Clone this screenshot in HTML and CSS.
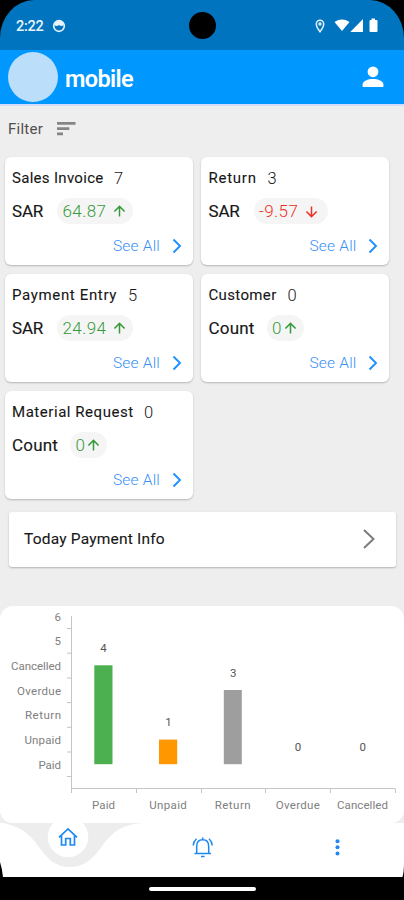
FILE: index.html
```html
<!DOCTYPE html>
<html lang="en">
<head>
<meta charset="utf-8">
<title>mobile</title>
<link rel="stylesheet" href="styles.css">
</head>
<body>
<div class="phone">
  <div class="status">
    <span class="time">2:22</span>
    <svg class="face" width="14" height="14" viewBox="0 0 14 14"><circle cx="7" cy="7" r="5.3" fill="none" stroke="#e8f3fc" stroke-width="1.7"/><path d="M2.5 3.2Q7 .6 11.500 3.200L11.300 6.500Q9 7.500 7 6Q5 7.500 2.700 6.500Z" fill="#e8f3fc"/></svg>
    <span class="camera"></span>
    <svg class="signals" width="66" height="16" viewBox="0 0 66 16">
      <path d="M6 13.700C3.500 10.500 2.300 8.500 2.300 6a3.700 3.700 0 0 1 7.400 0C9.700 8.500 8.500 10.500 6 13.700Z" fill="none" stroke="#e3f0fb" stroke-width="1.500"/><circle cx="6" cy="6" r="1.700" fill="#e3f0fb"/>
      <path d="M20.500 4Q28 -.8 35.500 4L28 13Z" fill="#fff"/>
      <path d="M49 1V14H36.300Z" fill="#fff"/>
      <path d="M57.500 .5h3.500v1.500h1.500q1 0 1 1v10q0 1-1 1h-6q-1 0-1-1v-10q0-1 1-1h1Z" fill="#fff"/>
    </svg>
  </div>
  <header class="appbar">
    <span class="avatar"></span>
    <h1 class="title">mobile</h1>
    <svg class="user" width="22" height="22" viewBox="0 0 22 22" fill="#fff"><circle cx="11" cy="5.800" r="5.400"/><path d="M.6 21v-2.500C.6 15 6 13 11 13s10.400 2 10.400 5.500V21Z"/></svg>
  </header>
  <main class="content">
    <div class="filter"><span>Filter</span>
      <svg width="20" height="14" viewBox="0 0 20 14" fill="#858585"><path d="M1 0h18.500v2.800H1zM1 5.300h12.300v2.700H1zM1 10.600h6v2.700H1z"/></svg>
    </div>
    <div class="grid">
      <section class="card">
        <div class="head"><span class="w-sales">Sales Invoice</span><span class="num">7</span></div>
        <div class="value"><span class="unit">SAR</span><span class="pill up">64.87<svg class="arrow" viewBox="0 0 14 14"><path d="M7 12.500V1.500M1.500 7L7 1.500L12.500 7"/></svg></span></div>
        <div class="see"><span>See All</span><svg width="10" height="16" viewBox="0 0 10 16"><path d="M1.500 1.500L8 8L1.500 14.500"/></svg></div>
      </section>
      <section class="card">
        <div class="head"><span class="w-return">Return</span><span class="num">3</span></div>
        <div class="value"><span class="unit">SAR</span><span class="pill down">-9.57<svg class="arrow" viewBox="0 0 14 14"><path d="M7 1.500V12.500M1.500 7L7 12.500L12.500 7"/></svg></span></div>
        <div class="see"><span>See All</span><svg width="10" height="16" viewBox="0 0 10 16"><path d="M1.500 1.500L8 8L1.500 14.500"/></svg></div>
      </section>
      <section class="card">
        <div class="head"><span class="w-payment">Payment Entry</span><span class="num">5</span></div>
        <div class="value"><span class="unit">SAR</span><span class="pill up">24.94<svg class="arrow" viewBox="0 0 14 14"><path d="M7 12.500V1.500M1.500 7L7 1.500L12.500 7"/></svg></span></div>
        <div class="see"><span>See All</span><svg width="10" height="16" viewBox="0 0 10 16"><path d="M1.500 1.500L8 8L1.500 14.500"/></svg></div>
      </section>
      <section class="card">
        <div class="head"><span class="w-customer">Customer</span><span class="num">0</span></div>
        <div class="value"><span class="unit count">Count</span><span class="pill up short">0<svg class="arrow" viewBox="0 0 14 14"><path d="M7 12.500V1.500M1.500 7L7 1.500L12.500 7"/></svg></span></div>
        <div class="see"><span>See All</span><svg width="10" height="16" viewBox="0 0 10 16"><path d="M1.500 1.500L8 8L1.500 14.500"/></svg></div>
      </section>
      <section class="card">
        <div class="head"><span class="w-material">Material Request</span><span class="num">0</span></div>
        <div class="value"><span class="unit count">Count</span><span class="pill up short">0<svg class="arrow" viewBox="0 0 14 14"><path d="M7 12.500V1.500M1.500 7L7 1.500L12.500 7"/></svg></span></div>
        <div class="see"><span>See All</span><svg width="10" height="16" viewBox="0 0 10 16"><path d="M1.500 1.500L8 8L1.500 14.500"/></svg></div>
      </section>
    </div>
    <section class="today"><span>Today Payment Info</span>
      <svg width="12" height="20" viewBox="0 0 12 20"><path d="M1 1L10.500 10L1 19" fill="none" stroke="#7c7c7c" stroke-width="2"/></svg>
    </section>
    <section class="chart">
      <svg width="404" height="217" viewBox="0 606 404 217">
        <path d="M71.500 616V793M67 628.500h4M67 653.200h4M67 678h4M67 702.600h4M67 727.300h4M67 752h4M67 776.500h4M71 788.500H395.500M136.500 789v4M201.500 789v4M265.500 789v4M330.500 789v4M395.500 789v4" fill="none" stroke="#c4c4c4"/>
        <rect x="94.300" y="665.300" width="18.200" height="98.900" fill="#4caf50"/>
        <rect x="159" y="739.600" width="18.200" height="24.600" fill="#ff9800"/>
        <rect x="223.800" y="690" width="18" height="74.200" fill="#9e9e9e"/>
        <g class="axis" text-anchor="end">
          <text x="61" y="620.500">6</text><text x="61" y="645.200">5</text>
          <text x="61" y="669.800" textLength="50">Cancelled</text><text x="61" y="694.500" textLength="44">Overdue</text>
          <text x="61" y="719.200" textLength="36">Return</text><text x="61" y="744" textLength="36.500">Unpaid</text>
          <text x="61" y="768.600" textLength="22.500">Paid</text>
        </g>
        <g class="axis" text-anchor="middle">
          <text x="103.500" y="809" textLength="23">Paid</text><text x="168" y="809" textLength="37.500">Unpaid</text>
          <text x="232.700" y="809" textLength="36">Return</text><text x="297.800" y="809" textLength="44">Overdue</text>
          <text x="362.500" y="809" textLength="51">Cancelled</text>
        </g>
        <g class="axis data" text-anchor="middle">
          <text x="103.500" y="652">4</text><text x="168.500" y="725.500">1</text><text x="233.300" y="676.500">3</text><text x="298" y="750.700">0</text><text x="362.700" y="750.700">0</text>
        </g>
      </svg>
    </section>
  </main>
  <nav class="nav">
    <svg width="404" height="54" viewBox="0 823 404 54">
      <path d="M0 823H404V862Q404 872 402.500 877H3Q2 868 0 862Z" fill="#fff"/>
      <path d="M3 823C23 827 31 836 39 847C48 860 56 867 70 867C84 867 93 859 102 846C111 834 119 825 143 823Z" fill="#ededed"/>
      <circle cx="68" cy="837" r="20.300" fill="#fff"/>
      <g fill="none" stroke="#1e88f0" stroke-width="1.700">
        <path d="M59 837.300L68 829L77 837.300M61.500 835.500V845H65.700V838.500H70.300V845H74.500V835.500"/>
        <path d="M194.500 853.500H211M196.700 853.500V846.500C196.700 842.500 199 839.800 202.700 839.800S208.700 842.500 208.700 846.500V853.500M202.700 837.500V840M201 856.500H204.500M193.200 845.500Q193.500 841.500 196.500 838.700M212.200 845.500Q212 841.500 209 838.700" stroke-width="1.500"/>
      </g>
      <g fill="#1e88f0"><circle cx="337.500" cy="841.200" r="2"/><circle cx="337.500" cy="847.300" r="2"/><circle cx="337.500" cy="853.500" r="2"/></g>
    </svg>
  </nav>
  <div class="gesture"><span></span></div>
</div>
</body>
</html>
```
FILE: styles.css
```css
* { box-sizing: border-box; }
body { margin: 0; background: #000; font-family: Roboto, "Open Sans", sans-serif; color: #171717; }
svg { display: block; flex: none; }
.phone { width: 404px; height: 900px; overflow: hidden; display: flex; flex-direction: column; }
.status { position: relative; height: 50px; flex: none; background: #0074be; border-radius: 34px 34px 0 0 / 38px 38px 0 0; display: flex; align-items: center; padding: 2px 24px 0 16px; }
.time { font-size: 14.5px; font-weight: 500; color: #eaf4fc; width: 36px; letter-spacing: -.3px; }
.camera { position: absolute; left: 189px; top: 12px; width: 27px; height: 27px; border-radius: 50%; background: #000; }
.signals { margin-left: auto; }
.appbar { height: 56px; flex: none; background: #0098ff; border-bottom: 2px solid #d3dcfb; display: flex; align-items: center; padding: 0 20px 0 8px; }
.avatar { width: 50px; height: 50px; border-radius: 50%; background: #bbdefb; }
.title { margin: 3px 0 0 7px; font-size: 23.5px; font-weight: 600; color: #fff; letter-spacing: -.65px; }
.user { margin-left: auto; }
.content { height: 717px; flex: none; background: #eee; }
.filter { height: 51px; padding: 0 8px 5px; display: flex; align-items: center; gap: 13px; font-size: 15px; color: #505050; letter-spacing: .25px; }
.grid { display: grid; grid-template-columns: 188px 188px; grid-auto-rows: 108px; column-gap: 8.500px; row-gap: 9.200px; padding-left: 4.500px; }
.card { background: #fff; border-radius: 6px; box-shadow: 0 1px 2px rgba(0,0,0,.24); padding: 9px 11px 0 7.500px; white-space: nowrap; }
.head { height: 24px; display: flex; align-items: center; font-size: 15px; -webkit-text-stroke: .1px #171717; }
.num { margin-left: 11px; font-size: 16.5px; font-weight: 300; -webkit-text-stroke: 0; }
.w-sales { width: 91px; letter-spacing: .3px; }
.w-return { width: 48px; letter-spacing: .75px; }
.w-payment { width: 105px; letter-spacing: .65px; }
.w-customer { width: 68px; letter-spacing: .35px; }
.w-material { width: 121px; letter-spacing: .55px; }
.value { height: 42px; display: flex; align-items: center; }
.unit { width: 45px; font-size: 17px; letter-spacing: -.2px; -webkit-text-stroke: .15px #171717; }
.unit.count { width: 58px; letter-spacing: .2px; }
.pill { height: 26px; width: 76px; border-radius: 13px; background: #f5f5f5; display: flex; align-items: center; padding-left: 5.500px; gap: 7px; font-size: 17px; font-weight: 300; letter-spacing: .4px; }
.pill.short { width: 37px; gap: 2px; }
.up { color: #359a3a; }
.pill.down { color: #ee3024; width: 74px; }
.arrow { width: 13px; height: 13px; fill: none; stroke: currentColor; stroke-width: 1.600; }
.see { height: 28px; display: flex; align-items: center; justify-content: flex-end; gap: 11.500px; color: #388ff7; font-size: 15.5px; font-weight: 300; letter-spacing: .2px; }
.see path { fill: none; stroke: #1e90ff; stroke-width: 1.900; }
.today { margin: 12.500px 8px 0 9px; height: 55px; background: #fff; border-radius: 3px; box-shadow: 0 1px 2px rgba(0,0,0,.25); display: flex; align-items: center; justify-content: space-between; padding: 0 21px 0 15px; font-size: 15.5px; letter-spacing: .2px; }
.today span { -webkit-text-stroke: .1px #171717; }
.chart { margin-top: 39px; height: 217px; background: #fff; border-radius: 13px; overflow: hidden; }
.axis { fill: #808080; font-size: 11.5px; }
.data { fill: #555; }
.nav { height: 54px; flex: none; }
.gesture { height: 23px; display: flex; justify-content: center; padding-top: 9.500px; }
.gesture span { width: 107px; height: 4.500px; border-radius: 3px; background: #fff; }
```
